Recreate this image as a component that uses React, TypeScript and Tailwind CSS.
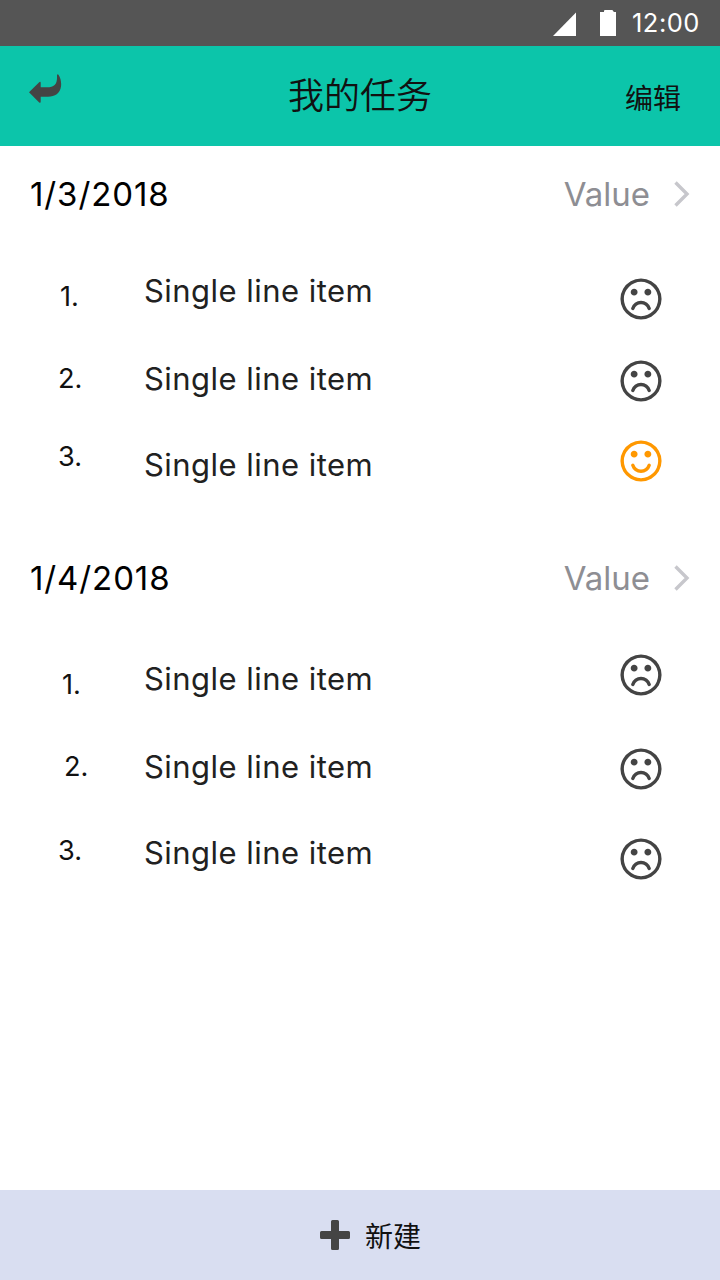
const EYES =
  "M768 640q0 53-37.5 90.5t-90.5 37.5-90.5-37.5-37.5-90.5 37.5-90.5 90.5-37.5 90.5 37.5 37.5 90.5zm512 0q0 53-37.5 90.5t-90.5 37.5-90.5-37.5-37.5-90.5 37.5-90.5 90.5-37.5 90.5 37.5 37.5 90.5zm256 256q0-130-51-248.5t-136.5-204-204-136.5-248.5-51-248.5 51-204 136.5-136.5 204-51 248.5 51 248.5 136.5 204 204 136.5 248.5 51 248.5-51 204-136.5 136.5-204 51-248.5zm128 0q0 209-103 385.5t-279.5 279.5-385.5 103-385.5-103-279.5-279.5-103-385.5 103-385.5 279.5-279.5 385.5-103 385.5 103 279.5 279.5 103 385.5z";
const FROWN =
  "M1262 1229q8 25-4 48.5t-37 31.5-49-4-32-38q-25-80-92.5-129.5t-151.5-49.5-151.5 49.5-92.5 129.5q-8 26-31.5 38t-48.5 4q-26-8-38-31.5t-4-48.5q37-121 138-195t228-74 228 74 138 195z";
const SMILE =
  "M1262 1075q-37 121-138 195t-228 74-228-74-138-195q-8-25 4-48.5t38-31.5q25-8 48.5 4t31.5 38q25 80 92.5 129.5t151.5 49.5 151.5-49.5 92.5-129.5q8-26 32-38t49-4 37 31.5 4 48.5z";

type Task = {
  label: string;
  done?: boolean;
  row: string;
  number: string;
  text: string;
  face: string;
};

type Day = { date: string; tasks: Task[] };

const days: Day[] = [
  {
    date: "1/3/2018",
    tasks: [
      { label: "1.", row: "h-[94px]", number: "pt-[34px] pl-[60px]", text: "pt-[29px]", face: "pt-[36px]" },
      { label: "2.", row: "h-[86px]", number: "pt-[22px] pl-[58px]", text: "pt-[23px]", face: "pt-[24px]" },
      { label: "3.", done: true, row: "h-[108px]", number: "pt-[14px] pl-[58px]", text: "pt-[23px]", face: "pt-[18px]" },
    ],
  },
  {
    date: "1/4/2018",
    tasks: [
      { label: "1.", row: "h-[98px]", number: "pt-[38px] pl-[62px]", text: "pt-[33px]", face: "pt-[28px]" },
      { label: "2.", row: "h-[86px]", number: "pt-[22px] pl-[64px]", text: "pt-[23px]", face: "pt-[24px]" },
      { label: "3.", row: "h-[90px]", number: "pt-[20px] pl-[58px]", text: "pt-[23px]", face: "pt-[28px]" },
    ],
  },
];

function Face({ happy }: { happy?: boolean }) {
  return (
    <svg
      viewBox="112 112 1568 1568"
      className={happy ? "h-[42px] w-[42px] fill-[#ff9800]" : "h-[42px] w-[42px] fill-[#444444]"}
    >
      <path d={EYES} />
      <path d={happy ? SMILE : FROWN} />
    </svg>
  );
}

function StatusBar() {
  return (
    <div className="flex h-[46px] items-start justify-end bg-[#555555] pr-[20px] text-white">
      <svg viewBox="0 0 24 24" className="mt-[12px] mr-[23px] h-6 w-6 fill-white">
        <path d="M0 24L23 0.500V24z" />
      </svg>
      <svg viewBox="0 0 16 26" className="mt-[10px] mr-[16px] h-[26px] w-4 fill-white">
        <path d="M0 2h4V1q0-1 1-1h7q1 0 1 1l1 1h2v24H0z" />
      </svg>
      <span className="w-[68px] text-[25.5px] leading-[46px] tracking-[0.5px]">12:00</span>
    </div>
  );
}

function Header() {
  return (
    <header className="grid h-[100px] grid-cols-3 bg-[#0cc5aa] text-[#111111]">
      <div className="pt-[28px] pl-[29px]">
        <svg viewBox="0 0 33 29" className="h-[29px] w-[33px] fill-[#444444]">
          <path d="M0 18.300L10.200 8.200q1.500-1 1.500.7v4.400h6.300c7.500 0 10.500-3 10-11.800Q28.300-.500 29.500 .8C31.800 4.500 32.500 8.500 32 12.500C31 19.500 26 22.700 19 22.700h-7.300v4.800q0 1.900-1.500.9z" />
        </svg>
      </div>
      <h1 className="pt-[24px] text-center text-[36px] leading-[52px] font-[350]">我的任务</h1>
      <div className="pt-[33px] pr-[39px] text-right text-[28px] leading-[40px]">编辑</div>
    </header>
  );
}

function DaySection({ day }: { day: Day }) {
  return (
    <section>
      <div className="flex h-24 items-center pr-[30px] pl-[30px] text-[33px] leading-[40px]">
        <h2 className="flex-1 tracking-[0.9px] text-black">{day.date}</h2>
        <span className="mr-[24px] text-[#8e8e93]">Value</span>
        <svg viewBox="0 0 16 26" className="h-[26px] w-4 fill-none stroke-[#c7c7cc]" strokeWidth="3.4">
          <path d="M1.500 1.500L13 13L1.500 24.500" />
        </svg>
      </div>
      <ul>
        {day.tasks.map((task) => (
          <li key={task.label} className={`flex items-start ${task.row}`}>
            <span className={`w-36 text-[27.2px] leading-[41px] text-[#111111] ${task.number}`}>{task.label}</span>
            <span className={`flex-1 text-[31px] leading-[39px] tracking-[0.46px] text-[#212121] ${task.text}`}>
              Single line item
            </span>
            <span className={`mr-[58px] ${task.face}`}>
              <Face happy={task.done} />
            </span>
          </li>
        ))}
      </ul>
    </section>
  );
}

export default function App() {
  return (
    <div className="flex h-[1280px] w-[720px] flex-col overflow-hidden bg-white font-['Inter','Noto_Sans_CJK_SC',sans-serif] [font-feature-settings:'calt'_0]">
      <StatusBar />
      <Header />
      <main className="flex-1">
        {days.map((day) => (
          <DaySection key={day.date} day={day} />
        ))}
      </main>
      <button className="flex h-[90px] w-full items-center bg-[#d9def1] pl-[320px] text-[28px] leading-[40px] text-[#111111]">
        <svg viewBox="0 0 30 30" className="mr-[15px] h-[30px] w-[30px] fill-[#444444]">
          <path d="M12.500 0h5q1.500 0 1.500 1.500V11h9.500q1.500 0 1.500 1.500v5q0 1.500-1.500 1.500H19v9.500q0 1.500-1.500 1.500h-5q-1.500 0-1.500-1.500V19H1.500Q0 19 0 17.500v-5Q0 11 1.500 11H11V1.500Q11 0 12.500 0z" />
        </svg>
        <span className="pt-[4px]">新建</span>
      </button>
    </div>
  );
}
